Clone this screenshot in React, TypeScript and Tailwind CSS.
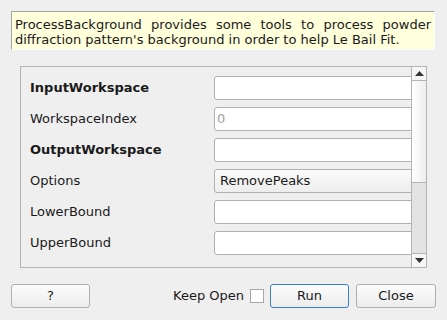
import React from "react";

const font = { fontFamily: '"DejaVu Sans", sans-serif' };

function Row({ label, bold, children }: { label: string; bold?: boolean; children?: React.ReactNode }) {
  return (
    <div className="flex h-[24px] items-center">
      <div className={`w-[184px] shrink-0 text-[13px] text-[#1a1a1a] ${bold ? "font-bold" : ""}`}>{label}</div>
      <div className="h-[24px] w-[220px] shrink-0">{children}</div>
    </div>
  );
}

function Field({ placeholder }: { placeholder?: string }) {
  return (
    <div className="flex h-full w-full items-center rounded-[3px] border border-[#b0b0b0] bg-white pl-[2px] text-[13px] text-[#a0a0a0]">
      {placeholder}
    </div>
  );
}

function Btn({ children, primary, w }: { children: React.ReactNode; primary?: boolean; w: string }) {
  return (
    <div
      className={`flex h-[24px] ${w} items-center justify-center rounded-[3px] border ${
        primary ? "border-[#3b7fc4]" : "border-[#b0b0b0]"
      } bg-gradient-to-b from-[#fcfcfc] to-[#ececec] text-[13px] text-[#1a1a1a]`}
    >
      {children}
    </div>
  );
}

export default function App() {
  return (
    <div className="h-[320px] w-[447px] overflow-hidden bg-[#efefef]" style={font}>
      <div className="pl-[11px] pt-[11px]">
        <div className="h-[39px] w-[424px] border-l border-t border-[#a6a6a6] border-b-white border-r-white border-b border-r bg-[#ffffdc] pl-[3px] pr-[3px] pt-[5px] text-justify text-[13px] leading-[15px] text-[#1a1a1a]">
          ProcessBackground provides some tools to process powder diffraction pattern's background in order to help Le Bail Fit.
        </div>
      </div>
      <div className="ml-[20px] mt-[16px] flex h-[202px] w-[407px] border border-[#b4b4b4]">
        <div className="flex flex-1 flex-col gap-[7px] overflow-hidden pl-[9px] pt-[9px]">
          <Row label="InputWorkspace" bold>
            <Field />
          </Row>
          <Row label="WorkspaceIndex">
            <Field placeholder="0" />
          </Row>
          <Row label="OutputWorkspace" bold>
            <Field />
          </Row>
          <Row label="Options">
            <div className="flex h-full w-full items-center rounded-[3px] border border-[#b0b0b0] bg-gradient-to-b from-[#fbfbfb] to-[#ededed] pl-[5px] text-[13px] text-[#1a1a1a]">
              RemovePeaks
            </div>
          </Row>
          <Row label="LowerBound">
            <Field />
          </Row>
          <Row label="UpperBound">
            <Field />
          </Row>
        </div>
        <div className="flex w-[15px] shrink-0 flex-col border-l border-[#b4b4b4]">
          <div className="flex h-[14px] items-center justify-center border-b border-[#b4b4b4] bg-[#f6f6f6]">
            <svg width="9" height="5" viewBox="0 0 9 5"><path d="M0 5 L4.5 0 L9 5 Z" fill="#333" /></svg>
          </div>
          <div className="h-[102px] border-b border-[#b4b4b4] bg-gradient-to-r from-[#ffffff] to-[#eeeeee]" />
          <div className="flex-1 bg-[#e3e3e3]" />
          <div className="flex h-[14px] items-center justify-center border-t border-[#b4b4b4] bg-[#f6f6f6]">
            <svg width="9" height="5" viewBox="0 0 9 5"><path d="M0 0 L4.5 5 L9 0 Z" fill="#333" /></svg>
          </div>
        </div>
      </div>
      <div className="mt-[16px] flex items-center pl-[11px]">
        <Btn w="w-[79px]">?</Btn>
        <div className="flex-1" />
        <div className="mr-[6px] text-[13px] text-[#1a1a1a]">Keep Open</div>
        <div className="mr-[6px] h-[14px] w-[14px] border border-[#a8a8a8] bg-white" />
        <Btn w="w-[79px]" primary>Run</Btn>
        <div className="w-[7px]" />
        <Btn w="w-[80px]">Close</Btn>
        <div className="w-[11px]" />
      </div>
    </div>
  );
}
